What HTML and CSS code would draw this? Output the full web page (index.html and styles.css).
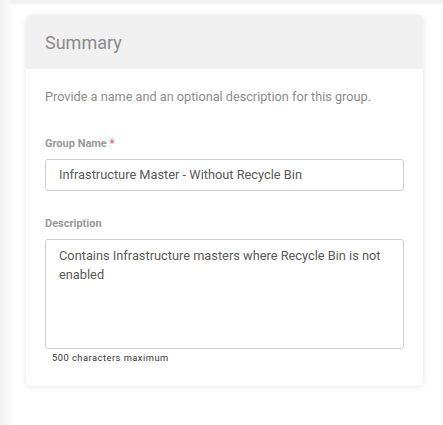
FILE: index.html
```html
<!DOCTYPE html>
<html>
<head>
<meta charset="utf-8">
<link rel="stylesheet" href="styles.css">
</head>
<body>
<div class="page">
  <div class="topbar"></div>
  <div class="content">
    <div class="card">
      <div class="card-header">Summary</div>
      <div class="card-body">
        <p class="intro">Provide a name and an optional description for this group.</p>
        <label class="label">Group Name <span class="req">*</span></label>
        <div class="input">Infrastructure Master - Without Recycle Bin</div>
        <label class="label label-desc">Description</label>
        <div class="textarea">Contains Infrastructure masters where Recycle Bin is not enabled</div>
        <div class="hint">500 characters maximum</div>
      </div>
    </div>
  </div>
</div>
</body>
</html>
```
FILE: styles.css
```css
* { box-sizing: border-box; }
html, body { margin: 0; padding: 0; background: #fff; }
body { font-family: Roboto, "Liberation Sans", sans-serif; width: 443px; height: 425px; overflow: hidden; }
.page {
  height: 425px;
  background: linear-gradient(to right, #f2f2f2 0, #f6f6f6 6px, #fdfdfd 12px, #fff 18px);
  position: relative;
}
.topbar {
  height: 3px;
  margin-left: 10px;
  background: #f0f0f0;
  box-shadow: 0 1px 2px rgba(0,0,0,0.05);
}
.content { padding: 12px 20px 0 26px; }
.card {
  width: 397px;
  height: 371px;
  background: #fff;
  border-radius: 5px;
  box-shadow: 0 1px 6px rgba(0,0,0,0.10);
  overflow: hidden;
}
.card-header {
  height: 54px;
  background: #f0f0f0;
  color: #8a8a8a;
  font-size: 18px;
  padding: 17px 0 0 19px;
  line-height: 22px;
}
.card-body { padding: 20px 19px 0 19px; }
.intro {
  margin: 0;
  font-size: 12.7px;
  color: #8c8c8c;
  line-height: 16px;
}
.label {
  display: block;
  margin-top: 32px;
  font-size: 11px;
  font-weight: 700;
  color: #9a9a9a;
  line-height: 13px;
}
.req { color: #e0607a; }
.input {
  margin-top: 9px;
  width: 359px;
  height: 32px;
  border: 1px solid #cfcfcf;
  border-radius: 3px;
  padding: 0 0 0 13px;
  font-size: 12.8px;
  line-height: 30px;
  color: #5a5a5a;
}
.label-desc { margin-top: 26px; }
.textarea {
  margin-top: 9px;
  width: 359px;
  height: 110px;
  border: 1px solid #cfcfcf;
  border-radius: 3px;
  padding: 6px 20px 0 13px;
  font-size: 12.8px;
  line-height: 19px;
  color: #5a5a5a;
}
.hint {
  margin: 3px 0 0 7px;
  font-size: 9.3px;
  letter-spacing: 0.5px;
  color: #333;
  line-height: 12px;
}
```
